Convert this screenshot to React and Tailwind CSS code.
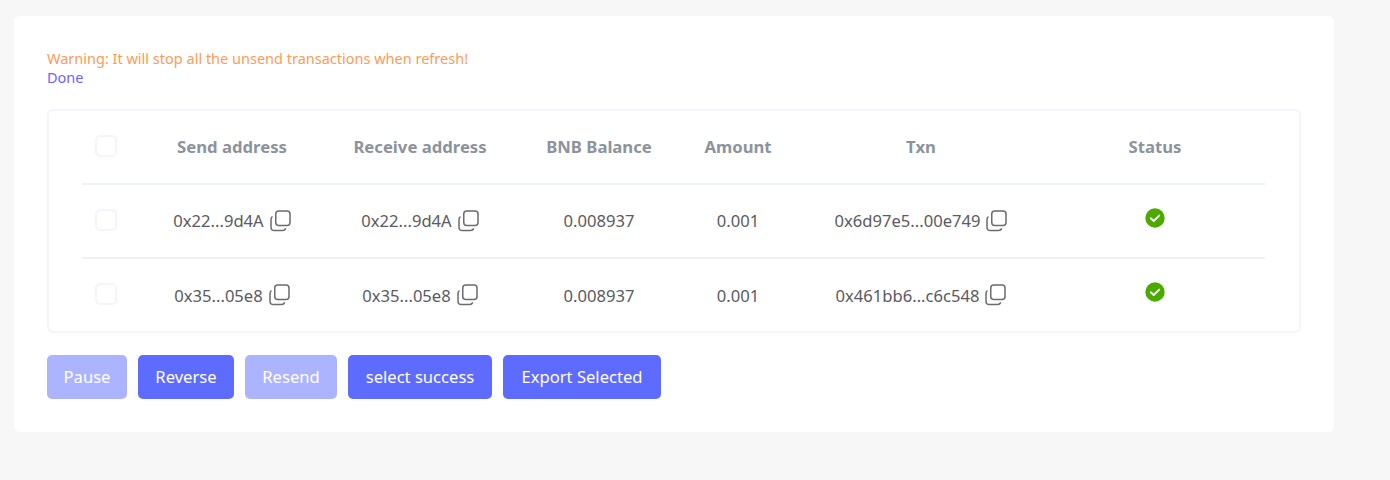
const rows = [
  { from: "0x22...9d4A", to: "0x22...9d4A", balance: "0.008937", amount: "0.001", txn: "0x6d97e5...00e749" },
  { from: "0x35...05e8", to: "0x35...05e8", balance: "0.008937", amount: "0.001", txn: "0x461bb6...c6c548" },
];

const buttons = [
  { label: "Pause", width: "w-[80px]", off: true },
  { label: "Reverse", width: "w-[96px]" },
  { label: "Resend", width: "w-[92px]", off: true },
  { label: "select success", width: "w-[144px]" },
  { label: "Export Selected", width: "w-[158px]" },
];

const gridCols = "grid grid-cols-[61px_178px_198px_160px_118px_248px_220px] items-center";

function CopyIcon() {
  return (
    <svg width="21" height="22" viewBox="0 0 21 22" fill="none" stroke="#6b6b70" strokeWidth="1.5" className="shrink-0">
      <rect x="5.75" y="1" width="14.25" height="14.5" rx="3" />
      <path d="M2.5 6.5 C1.5 7.2 1 8 1 9.5 V17 C1 19.3 2.4 20.6 4.5 20.6 H12.5 C14 20.6 15.2 19.8 15.8 18.4" />
    </svg>
  );
}

function StatusIcon() {
  return (
    <svg width="20" height="20" viewBox="0 0 20 20" className="-translate-y-[3px]">
      <circle cx="10" cy="10" r="9.7" fill="#4ca900" />
      <path d="M5.8 10.3 L8.7 13 L14.2 7.6" fill="none" stroke="#fff" strokeWidth="1.9" strokeLinecap="round" strokeLinejoin="round" />
    </svg>
  );
}

function Checkbox() {
  return <div className="ml-[13px] h-[22px] w-[22px] -translate-y-px rounded-[5px] border-2 border-[#f4f4ff] bg-white" />;
}

function Copyable({ text, textClass }) {
  return (
    <div className="flex items-center justify-center gap-[6px]">
      <span className={textClass}>{text}</span>
      <CopyIcon />
    </div>
  );
}

export default function App() {
  return (
    <div className="min-h-[480px] bg-[#f7f7f7] px-[14px] pt-4 font-['Noto_Sans',sans-serif]">
      <div className="w-[1320px] h-[416px] rounded-md bg-white pl-[33px] pr-[33px] pt-[33px]">
        <p className="text-[14.5px] leading-[19px] text-[#ff9a56]">Warning: It will stop all the unsend transactions when refresh!</p>
        <p className="text-[14.5px] leading-[19px] text-[#6c63ff]">Done</p>

        <div className="mt-[22px] h-[224px] rounded-md border-2 border-[#f4f4ff] pl-[33px] pr-[34px]">
          <div className={`${gridCols} h-[74px] border-b-2 border-[#eef0f7] text-[16.7px] font-bold text-[#8c939d]`}>
            <Checkbox />
            <div className="text-center">Send address</div>
            <div className="text-center">Receive address</div>
            <div className="text-center">BNB Balance</div>
            <div className="text-center">Amount</div>
            <div className="text-center">Txn</div>
            <div className="text-center">Status</div>
          </div>
          {rows.map((row, i) => {
            const textClass = i === 1 ? "translate-y-px" : "";
            return (
              <div key={i} className={`${gridCols} h-[74px] border-b-2 text-[16.6px] text-[#5a5a60] ${i === 0 ? "border-[#eef0f7]" : "border-transparent"}`}>
                <Checkbox />
                <Copyable text={row.from} textClass={textClass} />
                <Copyable text={row.to} textClass={textClass} />
                <div className={`text-center ${textClass}`}>{row.balance}</div>
                <div className={`text-center ${textClass}`}>{row.amount}</div>
                <Copyable text={row.txn} textClass={textClass} />
                <div className="flex justify-center"><StatusIcon /></div>
              </div>
            );
          })}
        </div>

        <div className="mt-[22px] flex gap-[11px]">
          {buttons.map((b) => (
            <button
              key={b.label}
              className={`h-11 rounded-[5px] text-[16.6px] text-white ${b.width} ${b.off ? "bg-[#adb4ff]" : "bg-[#5e6bff]"}`}
            >
              {b.label}
            </button>
          ))}
        </div>
      </div>
    </div>
  );
}
